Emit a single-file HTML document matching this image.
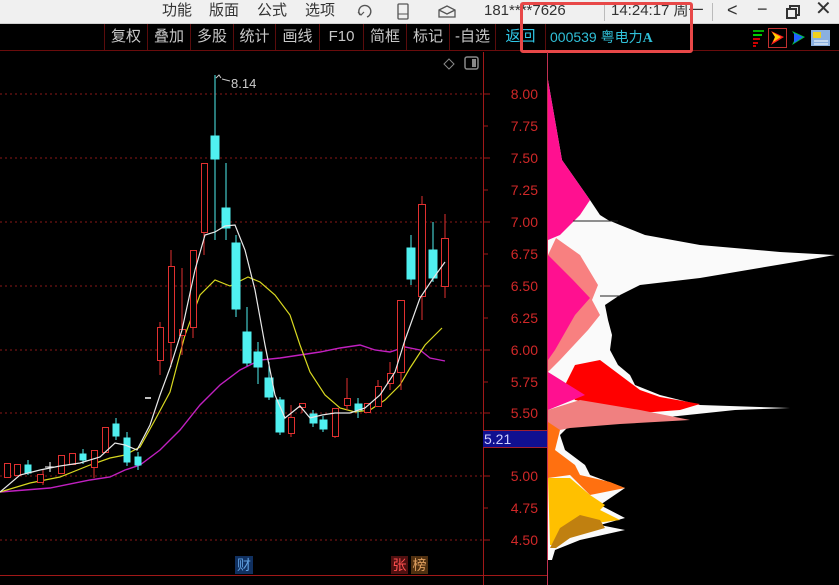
<!DOCTYPE html>
<html><head><meta charset="utf-8"><style>
*{margin:0;padding:0;box-sizing:border-box}
body{width:839px;height:585px;background:#000;overflow:hidden;position:relative;font-family:"Liberation Sans","Noto Sans CJK SC",sans-serif}
.tb{position:absolute;left:0;top:0;width:839px;height:24px;background:#f0f0f0;border-bottom:1px solid #d0d0d0}
.tb span{position:absolute;top:1px;font-size:15px;color:#333;line-height:20px}
.bar{position:absolute;left:0;top:24px;width:839px;height:27px;background:#000;border-bottom:1px solid #6a0c0c}
.btn{position:absolute;top:0;height:26px;line-height:26px;font-size:15px;color:#c8c8c8;text-align:center;border-left:1px solid #5a0c0c}
.lab{position:absolute;font-size:14px;color:#d02828;width:50px;text-align:right;left:488px}
</style></head><body>
<div class="tb">
<span style="left:162px">功能</span><span style="left:209px">版面</span><span style="left:257px">公式</span><span style="left:305px">选项</span>
<svg style="position:absolute;left:355px;top:3px" width="20" height="18"><path d="M5 12 A6 6 0 1 1 12 14" fill="none" stroke="#555" stroke-width="1.4"/><path d="M3 9 l3 3 l3 -3" fill="none" stroke="#555" stroke-width="1.2"/></svg>
<svg style="position:absolute;left:396px;top:2px" width="14" height="20"><rect x="2" y="2" width="10" height="15" rx="1" fill="none" stroke="#555" stroke-width="1.3"/><line x1="2" y1="12" x2="12" y2="12" stroke="#555"/></svg>
<svg style="position:absolute;left:437px;top:4px" width="20" height="16"><path d="M2 6 L10 2 L18 6 L18 13 L2 13 Z M2 6 L10 10 L18 6" fill="none" stroke="#555" stroke-width="1.3"/></svg>
<span style="left:484px">181****7626</span>
<div style="position:absolute;left:604px;top:3px;width:1px;height:18px;background:#bbb"></div>
<span style="left:611px">14:24:17 周一</span>
<div style="position:absolute;left:712px;top:3px;width:1px;height:18px;background:#bbb"></div>
<span style="left:727px;font-size:18px;top:0">&lt;</span>
<span style="left:757px;font-size:18px;top:-1px">−</span>
<svg style="position:absolute;left:785px;top:4px" width="16" height="16"><rect x="2" y="5" width="9" height="9" fill="none" stroke="#333" stroke-width="2"/><path d="M5 5V2h9v9h-3" fill="none" stroke="#333" stroke-width="2"/></svg>
<span style="left:815px;font-size:20px;top:-1px">✕</span>
</div>
<div class="bar">
<div class="btn" style="left:104px;width:43px">复权</div>
<div class="btn" style="left:147px;width:43px">叠加</div>
<div class="btn" style="left:190px;width:43px">多股</div>
<div class="btn" style="left:233px;width:42px">统计</div>
<div class="btn" style="left:275px;width:44px">画线</div>
<div class="btn" style="left:319px;width:44px">F10</div>
<div class="btn" style="left:363px;width:43px">简框</div>
<div class="btn" style="left:406px;width:43px">标记</div>
<div class="btn" style="left:449px;width:46px">-自选</div>
<div class="btn" style="left:495px;width:50px;color:#30c8e8">返回</div>
<div class="btn" style="left:545px;width:150px;text-align:left;padding-left:4px;color:#30c0d8;font-size:14px">000539 粤电力<b style="font-family:'Liberation Serif',serif">A</b></div>
<svg style="position:absolute;left:750px;top:4px" width="86" height="20">
<g stroke-width="2"><line x1="3" y1="3" x2="14" y2="3" stroke="#0a0"/><line x1="3" y1="7" x2="12" y2="7" stroke="#0c0"/><line x1="3" y1="11" x2="10" y2="11" stroke="#c00"/><line x1="3" y1="15" x2="8" y2="15" stroke="#c00"/><line x1="3" y1="18" x2="6" y2="18" stroke="#c00"/></g>
<rect x="18.5" y="0.5" width="18" height="19" fill="none" stroke="#c03030"/>
<path d="M21 3 L34 9 L21 17 L25 9 Z" fill="#ff2020"/><path d="M22 4 L31 9 L23 14 L25 9Z" fill="#ffd000"/>
<path d="M42 3 L55 9 L42 17 L46 9 Z" fill="#00c040"/><path d="M44 5 L53 9 L44 15 Z" fill="#2060ff"/>
<rect x="61" y="2" width="19" height="16" fill="#8ab0e0"/><rect x="63" y="4" width="8" height="6" fill="#f0d020"/><line x1="64" y1="13" x2="78" y2="13" stroke="#fff"/><line x1="64" y1="16" x2="78" y2="16" stroke="#fff"/>
</svg>
</div>
<div style="position:absolute;left:520px;top:2px;width:173px;height:51px;border:3px solid #e84848;border-radius:3px"></div>

<svg style="position:absolute;left:0;top:0" width="839" height="585">
<g stroke="#8a1818" stroke-dasharray="2 3" stroke-width="1">
<line x1="0" y1="94" x2="483" y2="94"/><line x1="0" y1="158" x2="483" y2="158"/><line x1="0" y1="222" x2="483" y2="222"/><line x1="0" y1="286" x2="483" y2="286"/><line x1="0" y1="350" x2="483" y2="350"/><line x1="0" y1="413" x2="483" y2="413"/><line x1="0" y1="476" x2="483" y2="476"/><line x1="0" y1="540" x2="483" y2="540"/>
</g>
<line x1="483.5" y1="52" x2="483.5" y2="585" stroke="#a01818"/>
<line x1="0" y1="575.5" x2="547" y2="575.5" stroke="#a01818"/>
<line x1="547.5" y1="52" x2="547.5" y2="585" stroke="#c03050"/>
<g stroke="#a01818"><line x1="483" y1="94" x2="490" y2="94"/><line x1="483" y1="126" x2="488" y2="126"/><line x1="483" y1="158" x2="490" y2="158"/><line x1="483" y1="190" x2="488" y2="190"/><line x1="483" y1="222" x2="490" y2="222"/><line x1="483" y1="254" x2="488" y2="254"/><line x1="483" y1="286" x2="490" y2="286"/><line x1="483" y1="318" x2="488" y2="318"/><line x1="483" y1="350" x2="490" y2="350"/><line x1="483" y1="382" x2="488" y2="382"/><line x1="483" y1="413" x2="490" y2="413"/><line x1="483" y1="476" x2="490" y2="476"/><line x1="483" y1="508" x2="488" y2="508"/><line x1="483" y1="540" x2="490" y2="540"/></g>
<path d="M449 59 l5 5 l-5 5 l-5 -5z" fill="none" stroke="#888"/>
<rect x="465" y="57" width="13" height="12" rx="2" fill="none" stroke="#888" stroke-width="1.5"/><rect x="472" y="59" width="4" height="8" fill="#888"/>

<!-- profile -->
<polygon points="548,80 562,160 590,200 600,215 608,220 620,225 645,235 700,245 780,252 835,255 795,262 700,278 640,285 620,295 605,305 608,320 612,335 610,350 618,365 630,375 635,385 660,395 700,405 790,408 735,410 640,420 570,425 560,435 565,450 585,465 590,475 625,488 600,505 625,518 600,525 625,530 580,540 555,550 552,560 548,560" fill="#fafafa"/>
<polygon points="548,80 562,160 590,200 580,215 560,235 548,240" fill="#ff1090"/>
<polygon points="556,238 580,255 598,285 592,300 600,315 588,330 560,360 548,372 548,255" fill="#f88080"/>
<polygon points="548,255 573,280 590,298 575,315 555,350 548,360" fill="#ff1090"/>
<polygon points="575,365 600,360 620,375 640,390 660,397 700,404 680,410 640,413 600,405 575,400 565,385" fill="#ff0000"/>
<polygon points="548,372 585,395 548,410" fill="#ff1090"/>
<polygon points="548,410 580,400 640,410 690,420 620,424 570,428 560,430 548,430" fill="#f08080"/>
<polygon points="548,422 560,430 555,450 575,465 580,475 610,482 625,488 590,495 570,475 548,478" fill="#ff7010"/>
<polygon points="548,478 570,478 590,495 605,505 600,510 620,520 580,525 560,545 550,545" fill="#ffc000"/>
<polygon points="560,528 580,515 600,520 605,528 570,538 556,548 550,548" fill="#c08010"/>
<line x1="573" y1="221" x2="618" y2="221" stroke="#222"/><line x1="600" y1="296" x2="620" y2="296" stroke="#222"/>

<!-- MA lines -->
<polyline fill="none" stroke="#c020c0" stroke-width="1.4" points="0,492 50,488 90,480 110,477 125,470 140,465 160,450 180,430 200,405 220,385 240,370 260,360 280,358 300,355 320,352 340,348 360,345 375,350 390,352 405,347 420,350 430,358 445,361"/>
<polyline fill="none" stroke="#d8d820" stroke-width="1.2" points="0,492 30,483 60,477 90,465 110,458 125,455 140,447 155,420 170,392 185,335 200,295 215,280 230,286 248,277 260,282 275,295 290,315 300,345 310,372 325,395 340,408 355,412 370,410 385,400 400,385 410,368 425,345 442,328"/>
<g id="c" stroke-width="1"></g>
<g stroke="#e03030" fill="#000">
<rect x="4.5" y="463.5" width="6" height="14"/><rect x="14.5" y="464.5" width="6" height="11"/><line x1="43" y1="470" x2="43" y2="485"/><rect x="37.5" y="474.5" width="6" height="8"/><rect x="58.5" y="455.5" width="6" height="18"/><rect x="69.5" y="453.5" width="6" height="11"/><line x1="94" y1="467" x2="94" y2="478"/><rect x="91.5" y="450.5" width="6" height="17"/><rect x="102.5" y="427.5" width="6" height="25"/>
<line x1="160" y1="322" x2="160" y2="375"/><rect x="157.5" y="327.5" width="6" height="33"/>
<line x1="171" y1="250" x2="171" y2="367"/><rect x="168.5" y="266.5" width="6" height="76"/>
<line x1="182" y1="268" x2="182" y2="355"/><rect x="179.5" y="329.5" width="6" height="6"/>
<line x1="193" y1="250" x2="193" y2="338"/><rect x="190.5" y="250.5" width="6" height="77"/>
<line x1="204" y1="163" x2="204" y2="255"/><rect x="201.5" y="163.5" width="6" height="69"/>
<line x1="291" y1="405" x2="291" y2="437"/><rect x="288.5" y="417.5" width="6" height="16"/>
<line x1="302" y1="403" x2="302" y2="413"/><rect x="299.5" y="403.5" width="6" height="4"/>
<line x1="335" y1="408" x2="335" y2="438"/><rect x="332.5" y="408.5" width="6" height="28"/>
<line x1="347" y1="378" x2="347" y2="410"/><rect x="344.5" y="398.5" width="6" height="7"/>
<rect x="364.5" y="403.5" width="6" height="9"/>
<line x1="378" y1="380" x2="378" y2="406"/><rect x="375.5" y="386.5" width="6" height="20"/>
<line x1="390" y1="362" x2="390" y2="390"/><rect x="387.5" y="373.5" width="6" height="10"/>
<line x1="401" y1="372" x2="401" y2="390"/><rect x="397.5" y="300.5" width="7" height="72"/>
<line x1="422" y1="196" x2="422" y2="320"/><rect x="418.5" y="204.5" width="7" height="92"/>
<line x1="445" y1="214" x2="445" y2="298"/><rect x="441.5" y="238.5" width="7" height="48"/>
</g>
<g stroke="#50f0f0" fill="#50f0f0">
<rect x="25" y="465" width="6" height="8"/><line x1="28" y1="460" x2="28" y2="475"/>
<rect x="80" y="454" width="6" height="6"/><line x1="83" y1="449" x2="83" y2="464"/>
<rect x="113" y="424" width="6" height="12"/><line x1="116" y1="418" x2="116" y2="440"/>
<rect x="124" y="438" width="6" height="24"/><line x1="127" y1="432" x2="127" y2="466"/>
<rect x="135" y="457" width="6" height="8"/><line x1="138" y1="452" x2="138" y2="470"/>
<line x1="215" y1="75" x2="215" y2="240"/><rect x="211" y="136" width="8" height="23"/>
<line x1="226" y1="163" x2="226" y2="240"/><rect x="222" y="208" width="8" height="20"/>
<line x1="236" y1="235" x2="236" y2="317"/><rect x="232" y="243" width="8" height="66"/>
<line x1="247" y1="307" x2="247" y2="366"/><rect x="243" y="332" width="8" height="31"/>
<line x1="258" y1="342" x2="258" y2="384"/><rect x="254" y="352" width="8" height="15"/>
<line x1="269" y1="362" x2="269" y2="400"/><rect x="265" y="378" width="8" height="19"/>
<line x1="280" y1="397" x2="280" y2="435"/><rect x="276" y="400" width="8" height="32"/>
<rect x="310" y="414" width="7" height="9"/><line x1="313" y1="410" x2="313" y2="427"/>
<rect x="320" y="420" width="7" height="9"/><line x1="323" y1="416" x2="323" y2="432"/>
<rect x="355" y="404" width="7" height="6"/><line x1="358" y1="398" x2="358" y2="418"/>
<line x1="411" y1="235" x2="411" y2="285"/><rect x="407" y="248" width="8" height="31"/>
<line x1="433" y1="222" x2="433" y2="282"/><rect x="429" y="250" width="8" height="28"/>
</g>
<line x1="45" y1="467" x2="56" y2="467" stroke="#fff"/><line x1="50" y1="462" x2="50" y2="472" stroke="#fff"/>
<line x1="145" y1="398" x2="151" y2="398" stroke="#fff" stroke-width="1.5"/>
<polyline fill="none" stroke="#e8e8e8" stroke-width="1.2" points="0,492 20,475 40,470 60,466 80,463 100,457 115,443 125,445 137,450 150,425 160,395 170,368 182,330 195,270 205,235 215,232 225,226 235,225 245,250 255,290 265,345 275,395 285,418 300,406 310,418 322,415 335,413 350,413 365,408 380,395 395,372 405,340 420,298 432,280 445,262"/>
<path d="M216 78 l3 -3 l2 3 M222 79 l8 2" stroke="#ccc" fill="none"/>
<text x="231" y="88" fill="#ccc" font-size="13" font-family="Liberation Sans">8.14</text>
</svg>
<div class="lab" style="top:86px">8.00</div><div class="lab" style="top:118px">7.75</div><div class="lab" style="top:150px">7.50</div><div class="lab" style="top:182px">7.25</div><div class="lab" style="top:214px">7.00</div><div class="lab" style="top:246px">6.75</div><div class="lab" style="top:278px">6.50</div><div class="lab" style="top:310px">6.25</div><div class="lab" style="top:342px">6.00</div><div class="lab" style="top:374px">5.75</div><div class="lab" style="top:405px">5.50</div><div class="lab" style="top:468px">5.00</div><div class="lab" style="top:500px">4.75</div><div class="lab" style="top:532px">4.50</div>
<div style="position:absolute;left:483px;top:430px;width:64px;height:18px;background:#101090;border-top:1px solid #a02030;border-bottom:1px solid #a02030;color:#d0d0ff;font-size:14px;line-height:16px;padding-left:1px">5.21</div>
<div style="position:absolute;left:235px;top:556px;width:18px;height:18px;background:#103060;color:#60a0e0;font-size:14px;line-height:18px;text-align:center">财</div>
<div style="position:absolute;left:391px;top:556px;width:17px;height:18px;background:#501010;color:#ff5050;font-size:14px;line-height:18px;text-align:center">张</div>
<div style="position:absolute;left:411px;top:556px;width:17px;height:18px;background:#503010;color:#e0a060;font-size:14px;line-height:18px;text-align:center">榜</div>
</body></html>
